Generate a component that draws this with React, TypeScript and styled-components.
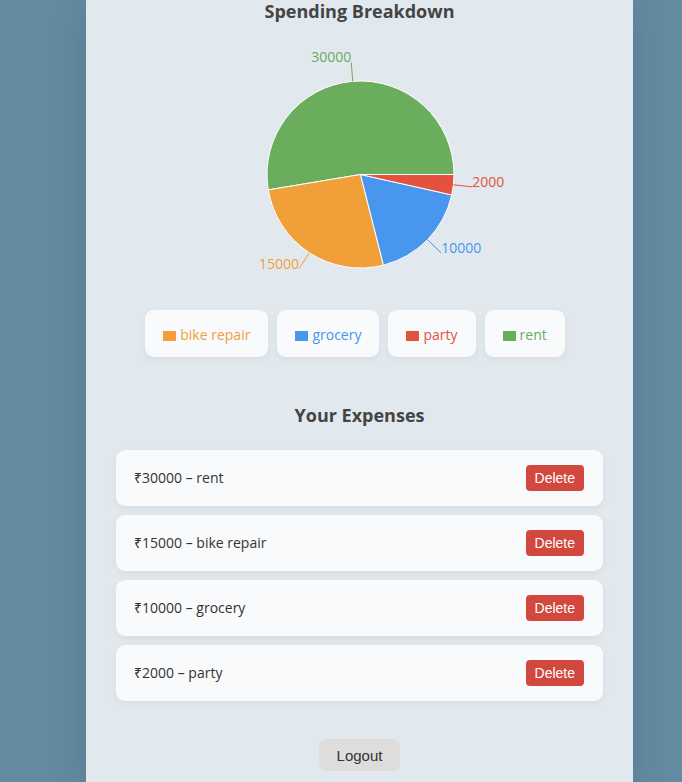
import React from "react";
import styled, { createGlobalStyle } from "styled-components";

const GlobalStyle = createGlobalStyle`
  * { box-sizing: border-box; }
  body {
    margin: 0;
    background: #628aa0;
    color: #333;
    font: 14px/20px "Open Sans", "Noto Sans", sans-serif;
  }
`;

const Page = styled.div`
  padding: 0 49px 0 86px;
  overflow: hidden;
`;

const Card = styled.main`
  display: flex;
  flex-direction: column;
  min-height: 100vh;
  padding: 0 30px 11px;
  background: #e1e8ee;
  box-shadow: 0 9px 27px rgba(80, 90, 120, 0.3);
`;

const Heading = styled.h2`
  margin: 0;
  color: #444;
  font-size: 18px;
  line-height: 22px;
  font-weight: 700;
  text-align: center;
`;

const Chart = styled.svg`
  display: block;
  width: 300px;
  height: 250px;
  margin: 26px auto 0;
`;

const SliceLabel = styled.text`
  font-size: 14px;
`;

const Legend = styled.ul`
  display: flex;
  flex-wrap: wrap;
  justify-content: center;
  gap: 9px;
  margin: 12px 0 0;
  padding: 0 9px 0 0;
  list-style: none;
`;

const LegendItem = styled.li<{ $color: string }>`
  display: flex;
  align-items: center;
  gap: 4px;
  height: 47px;
  padding: 3px 18px 0;
  border-radius: 9px;
  background: #f9fafc;
  box-shadow: 0 3px 8px rgba(0, 0, 0, 0.05);
  color: ${({ $color }) => $color};

  &::before {
    content: "";
    width: 13px;
    height: 10px;
    margin-top: 2px;
    background: ${({ $color }) => $color};
  }
`;

const Expenses = styled.section`
  margin-top: 47px;
`;

const ExpenseList = styled.ul`
  display: grid;
  gap: 9px;
  margin: 24px 0 0;
  padding: 0;
  list-style: none;
`;

const ExpenseRow = styled.li`
  display: flex;
  align-items: center;
  justify-content: space-between;
  height: 56px;
  padding: 0 19px 0 18px;
  border-radius: 9px;
  background: #f9fafc;
  box-shadow: 0 3px 8px rgba(0, 0, 0, 0.05);
`;

const Button = styled.button`
  border: 0;
  font-family: "Liberation Sans", Arial, sans-serif;
  cursor: pointer;
`;

const DeleteButton = styled(Button)`
  height: 26px;
  padding: 0 9px 1px;
  border-radius: 4px;
  background: #d2483f;
  color: #fff;
  font-size: 14px;
`;

const LogoutButton = styled(Button)`
  align-self: center;
  height: 32px;
  margin-top: 38px;
  padding: 0 18px;
  border-radius: 8px;
  background: #ddd;
  color: #333;
  font-size: 15px;
`;

const colors: Record<string, string> = {
  rent: "#69ad5d",
  "bike repair": "#f19f39",
  grocery: "#4996ee",
  party: "#e2523f",
};

const expenses = [
  { name: "rent", amount: 30000 },
  { name: "bike repair", amount: 15000 },
  { name: "grocery", amount: 10000 },
  { name: "party", amount: 2000 },
];

const center = { x: 150.5, y: 126.5 };
const radius = 93.5;
const total = expenses.reduce((sum, e) => sum + e.amount, 0);

function pointAt(angle: number, r: number) {
  return { x: center.x + r * Math.cos(angle), y: center.y - r * Math.sin(angle) };
}

function SpendingPie() {
  let start = 0;
  return (
    <Chart viewBox="0 0 300 250" role="img" aria-label="Spending by expense">
      {expenses.map(({ name, amount }) => {
        const end = start + (amount / total) * Math.PI * 2;
        const middle = (start + end) / 2;
        const from = pointAt(start, radius);
        const to = pointAt(end, radius);
        const edge = pointAt(middle, radius);
        const tip = pointAt(middle, radius + 19);
        const large = end - start > Math.PI ? 1 : 0;
        start = end;
        return (
          <g key={name} fill={colors[name]}>
            <path
              d={`M${center.x},${center.y} L${from.x},${from.y} A${radius},${radius} 0 ${large} 0 ${to.x},${to.y} Z`}
              stroke="#fff"
            />
            <path d={`M${edge.x},${edge.y} L${tip.x},${tip.y}`} stroke={colors[name]} />
            <SliceLabel x={tip.x} y={tip.y} textAnchor={tip.x > center.x ? "start" : "end"}>
              {amount}
            </SliceLabel>
          </g>
        );
      })}
    </Chart>
  );
}

export default function App() {
  return (
    <>
      <GlobalStyle />
      <Page>
        <Card>
          <Heading>Spending Breakdown</Heading>
          <SpendingPie />
          <Legend>
            {["bike repair", "grocery", "party", "rent"].map((name) => (
              <LegendItem key={name} $color={colors[name]}>
                {name}
              </LegendItem>
            ))}
          </Legend>
          <Expenses>
            <Heading>Your Expenses</Heading>
            <ExpenseList>
              {expenses.map(({ name, amount }) => (
                <ExpenseRow key={name}>
                  <span>₹{amount} – {name}</span>
                  <DeleteButton type="button" aria-label={`Delete ${name}`}>Delete</DeleteButton>
                </ExpenseRow>
              ))}
            </ExpenseList>
          </Expenses>
          <LogoutButton type="button">Logout</LogoutButton>
        </Card>
      </Page>
    </>
  );
}
